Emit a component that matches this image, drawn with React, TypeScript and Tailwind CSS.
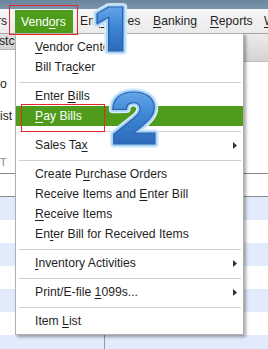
import React from "react";

const FONT = { fontFamily: '"Liberation Sans", Arial, sans-serif' };

type Item =
  | { sep: true }
  | { sep?: false; pre: string; u: string; post: string; arrow?: boolean; active?: boolean };

const items: Item[] = [
  { pre: "", u: "V", post: "endor Center" },
  { pre: "Bill Tra", u: "c", post: "ker" },
  { sep: true },
  { pre: "Enter ", u: "B", post: "ills" },
  { pre: "", u: "P", post: "ay Bills", active: true },
  { sep: true },
  { pre: "Sales Ta", u: "x", post: "", arrow: true },
  { sep: true },
  { pre: "Create P", u: "u", post: "rchase Orders" },
  { pre: "Receive Items and ", u: "E", post: "nter Bill" },
  { pre: "", u: "R", post: "eceive Items" },
  { pre: "En", u: "t", post: "er Bill for Received Items" },
  { sep: true },
  { pre: "", u: "I", post: "nventory Activities", arrow: true },
  { sep: true },
  { pre: "Print/E-file ", u: "1", post: "099s...", arrow: true },
  { sep: true },
  { pre: "Item ", u: "L", post: "ist" },
];

function U({ children }: { children: React.ReactNode }) {
  return <span className="underline decoration-1 underline-offset-[2px]">{children}</span>;
}

function Arrow() {
  return (
    <svg width="4" height="7" viewBox="0 0 4 7" className="block">
      <path d="M0 0 L4 3.5 L0 7 Z" fill="#333" />
    </svg>
  );
}

function Numeral({
  ch,
  id,
  fontSize,
  w,
  h,
  baseline,
}: {
  ch: string;
  id: string;
  fontSize: number;
  w: number;
  h: number;
  baseline: number;
}) {
  const common = {
    x: w / 2,
    y: baseline,
    textAnchor: "middle" as const,
    fontSize,
    fontWeight: 900,
    fontFamily: 'Inter, "Liberation Sans", Arial, sans-serif',
  };
  return (
    <svg width={w} height={h} viewBox={`0 0 ${w} ${h}`} className="block overflow-visible">
      <defs>
        <linearGradient id={id} x1="0" y1="0" x2="0" y2="1">
          <stop offset="0" stopColor="#7fbcf2" />
          <stop offset="0.45" stopColor="#3f88d6" />
          <stop offset="1" stopColor="#2159a8" />
        </linearGradient>
      </defs>
      <text {...common} fill="#d9edfd" stroke="#d9edfd" strokeWidth={7.5} strokeLinejoin="round">
        {ch}
      </text>
      <text {...common} fill="#a6d1f7" stroke="#a6d1f7" strokeWidth={4.5} strokeLinejoin="round">
        {ch}
      </text>
      <text {...common} fill={`url(#${id})`} stroke="#2a64ae" strokeWidth={1.2} strokeLinejoin="round">
        {ch}
      </text>
    </svg>
  );
}

export default function App() {
  const rows = Array.from({ length: 7 });
  return (
    <div className="relative w-[268px] h-[349px] overflow-hidden bg-white text-[12.2px] text-[#1f1f24]" style={FONT}>
      {/* title strip */}
      <div className="h-[9px] bg-gradient-to-b from-[#6a859f] to-[#7b94ab]" />
      {/* menu bar */}
      <div className="h-[25px] flex items-stretch bg-gradient-to-b from-[#f6f6f6] to-[#ebebeb] border-b border-[#a6a6a6] whitespace-nowrap">
        <div className="shrink-0 w-[15px] flex items-center -ml-[3px]">rs</div>
        <div className="shrink-0 w-[58px] ml-[3px] mt-[1px] -mb-px flex items-center pl-[6px] bg-[#4f9c1b] text-white">
          Vend<U>o</U>rs
        </div>
        <div className="shrink-0 w-[73px] flex items-center pl-[7px]">
          Em<U>p</U>loyees
        </div>
        <div className="shrink-0 w-[57px] flex items-center pl-[7px]">
          <U>B</U>anking
        </div>
        <div className="shrink-0 w-[56px] flex items-center pl-[7px]">
          <U>R</U>eports
        </div>
        <div className="shrink-0 flex items-center pl-[5px]">
          <U>W</U>indow
        </div>
      </div>

      {/* panes */}
      <div className="flex h-[139px]">
        <div className="w-[100px] flex flex-col border-r border-[#c8c8c8]">
          <div className="h-[16px] bg-gradient-to-b from-[#e2e2e2] to-[#d2d2d2] border-b border-[#b4b4b4] flex items-center overflow-hidden">
            <span className="-ml-[1px]">stc</span>
          </div>
          <div className="flex-1 relative">
            <div className="pt-[27px] leading-[14px]">o</div>
            <div className="pt-[18px] leading-[14px]">ist</div>
            <div className="pt-[33px] leading-[12px] text-[11px] text-[#a07aa6]">T</div>
          </div>
        </div>
        <div className="flex-1 flex flex-col">
          <div className="h-[28px] bg-gradient-to-b from-[#ececec] to-[#d3d3d3] border-b border-[#bdbdbd]" />
          <div className="flex-1 bg-white" />
        </div>
      </div>

      {/* table header */}
      <div className="h-[24px] border-t border-b border-[#8a8a8a] bg-white" />

      {/* rows */}
      {rows.map((_, i) => (
        <div key={i} className={`h-[23px] flex ${i % 2 === 0 ? "bg-[#e1ebfb]" : "bg-white"}`}>
          <div className="w-[105px] border-r border-[#9a9a9a]" />
          <div className="flex-1" />
        </div>
      ))}

      {/* dropdown menu */}
      <div className="absolute left-[15px] top-[33px] w-[229px] bg-white border border-[#b0b0b0] shadow-[2px_2px_3px_rgba(0,0,0,0.35)] py-[3px] whitespace-nowrap">
        {items.map((it, i) =>
          it.sep ? (
            <div key={i} className="h-[9px] pt-[5px] pl-[3px] pr-[2px]">
              <div className="h-px bg-[#cfcfcf]" />
            </div>
          ) : (
            <div
              key={i}
              className={`h-[20px] flex items-center pl-[19px] pr-[6px] ${
                it.active ? "bg-[#4f9c1b] text-white" : ""
              }`}
            >
              <span className="flex-1">
                {it.pre}
                <U>{it.u}</U>
                {it.post}
              </span>
              {it.arrow && <Arrow />}
            </div>
          )
        )}
      </div>

      {/* red highlight boxes */}
      <div className="absolute left-[9px] top-[5px] w-[69px] h-[30px] border border-[#e8262a]" />
      <div className="absolute left-[21px] top-[104px] w-[84px] h-[28px] border border-[#e8262a]" />

      {/* step numerals */}
      <div className="absolute left-[87px] top-0 scale-x-[1.18]">
        <Numeral ch="1" id="g1" fontSize={60} w={46} h={58} baseline={51} />
      </div>
      <div className="absolute left-[110px] top-[86px] scale-x-[1.05]">
        <Numeral ch="2" id="g2" fontSize={70} w={48} h={64} baseline={58} />
      </div>
    </div>
  );
}
